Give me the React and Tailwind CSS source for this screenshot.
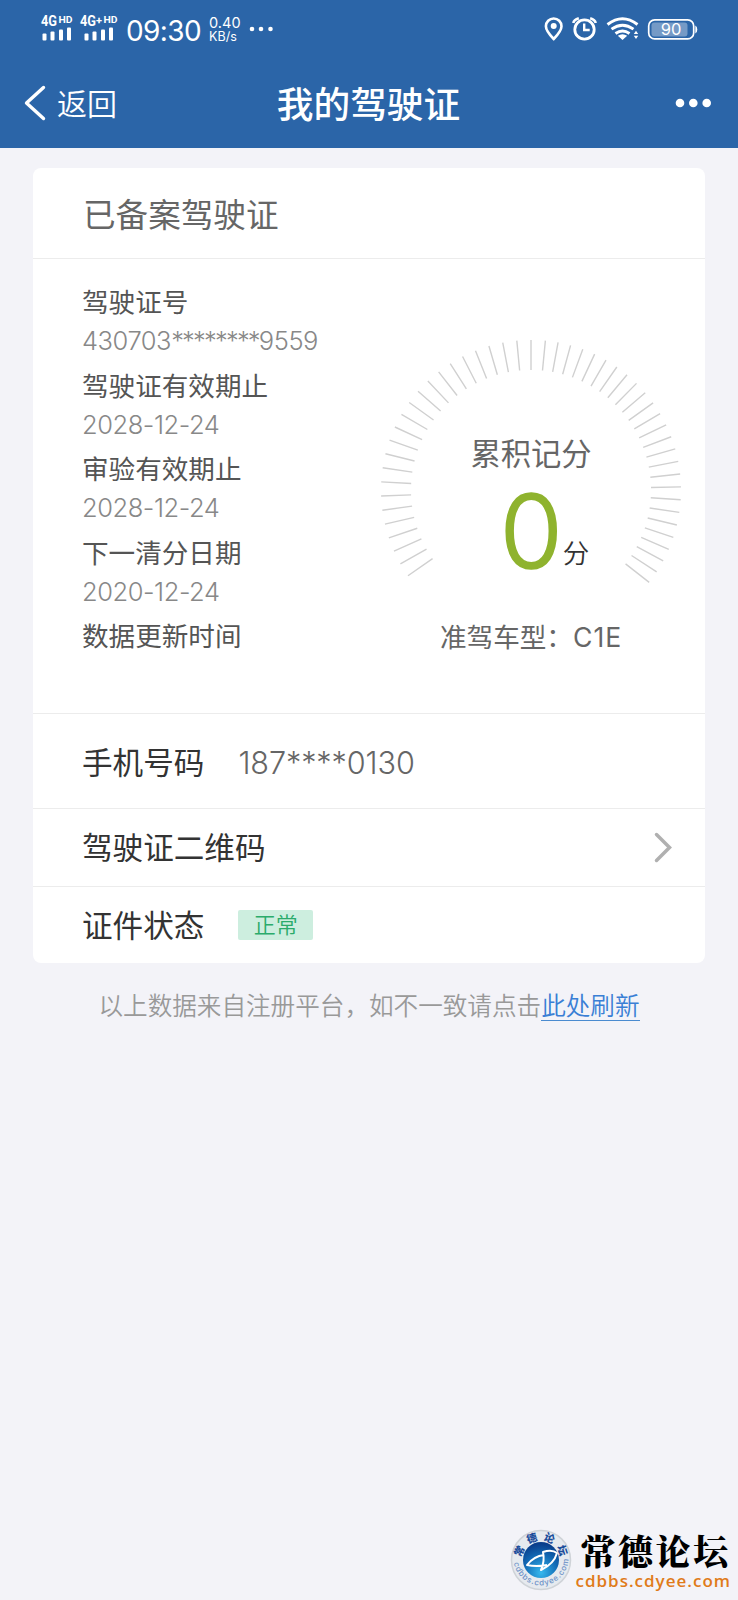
const CJK = "font-['Inter','Noto_Sans_CJK_SC',sans-serif]";

// Score dial, centred on (152, 152)
const OUTER = 150;
const INNER = 120;

function buildTicks() {
  const angles = [0];
  for (let i = 1; i <= 23; i++) angles.push(-5.43 * i);
  for (let i = 1; i <= 26; i++) angles.push(4.9 * i + 0.6);
  return angles.map((deg) => {
    const a = (deg * Math.PI) / 180;
    const x = Math.sin(a);
    const y = -Math.cos(a);
    return `M${(152 + INNER * x).toFixed(2)} ${(152 + INNER * y).toFixed(2)}L${(152 + OUTER * x).toFixed(2)} ${(152 + OUTER * y).toFixed(2)}`;
  }).join('');
}

const TICKS = buildTicks();

const FIELDS = [
  {
    label: '驾驶证号',
    value: <>430703<span className="tracking-[-1.8px]">********</span>9559</>,
  },
  { label: '驾驶证有效期止', value: '2028-12-24' },
  { label: '审验有效期止', value: '2028-12-24' },
  { label: '下一清分日期', value: '2020-12-24' },
  { label: '数据更新时间' },
];

function Signal({ plus }) {
  const w = plus ? 38 : 32;
  const bars = plus ? 4.5 : 1.5;
  return (
    <svg width={w} height="32" viewBox={`0 -4 ${w} 32`} fill="#fff" className="overflow-visible font-['Roboto',sans-serif] font-bold">
      <text x="0" y="11" fontSize="14" textLength="16" lengthAdjust="spacingAndGlyphs">4G</text>
      {plus && <text x="16" y="8.500" fontSize="11">+</text>}
      <text x={plus ? 23.500 : 17.500} y="8" fontSize="9.500" textLength="14" lengthAdjust="spacingAndGlyphs">HD</text>
      <rect x={bars} y="18.500" width="4" height="7" rx="1" />
      <rect x={bars + 8} y="16.500" width="4" height="9" rx="1" />
      <rect x={bars + 16.5} y="14.500" width="4" height="11" rx="1" />
      <rect x={bars + 24.5} y="12.500" width="4" height="13" rx="1" />
    </svg>
  );
}

function StatusBar() {
  return (
    <div className="flex h-[58px] items-center justify-between pl-[41px] pr-[40px] text-white">
      <div className="flex items-center">
        <div className="-mt-[5px] flex gap-[7px]">
          <Signal />
          <Signal plus />
        </div>
        <span className="ml-[8px] mt-[3px] text-[28px] font-normal leading-none tracking-[-0.600px]">09:30</span>
        <div className="ml-[8px] mt-px w-[33px] text-[14.500px] leading-[14px]">
          <div>0.40</div>
          <div className="text-[12.500px]">KB/s</div>
        </div>
        <svg className="ml-[7px]" width="25" height="6" viewBox="0 0 25 6" fill="#fff">
          <circle cx="3" cy="3" r="2.300" />
          <circle cx="12" cy="3" r="2.300" />
          <circle cx="21.500" cy="3" r="2.300" />
        </svg>
      </div>
      <svg width="154" height="26" viewBox="0 0 154 26" fill="none" stroke="#fff" strokeWidth="2.600">
        <path d="M9.700 23Q1.900 15 1.900 10.300a7.800 7.800 0 0 1 15.600 0Q17.500 15 9.700 23Z" />
        <circle cx="9.700" cy="10" r="3" fill="#fff" stroke="none" />
        <circle cx="40.500" cy="13.500" r="9.700" strokeWidth="2.800" />
        <path d="M40.200 7.500v6.500h5.500" strokeWidth="2.400" />
        <path d="M29.300 7q0.700-3.500 5.500-4.800M51.700 7q-0.700-3.500-5.500-4.800" />
        <path d="M63.500 8.500Q78.500-3 93.500 8.500M67.500 13.200q11-8 22 0M71.500 17.500q7-5 14 0" strokeWidth="2.900" />
        <path d="M73.800 19.800q4.700-3 9.400 0L78.500 24Z" fill="#fff" stroke="none" />
        <path d="M89.800 18l2.200-3.300 2.200 3.300zM89.800 19.700l2.200 3.300 2.200-3.300z" fill="#fff" stroke="none" />
        <rect x="104.700" y="3.900" width="45" height="19" rx="6" strokeWidth="1.700" />
        <rect x="107.500" y="6.500" width="36" height="14" rx="3" fill="#fff" fillOpacity="0.350" stroke="none" />
        <path d="M151.300 9.500q2 1 2 4t-2 4z" fill="#fff" stroke="none" />
        <text x="127" y="19" textAnchor="middle" fontSize="16.500" fill="#fff" stroke="none">90</text>
      </svg>
    </div>
  );
}

function NavBar() {
  return (
    <div className="grid h-[90px] grid-cols-[1fr_auto_1fr] items-center pl-[24px] pr-[26px] text-white">
      <div className="flex items-center">
        <svg width="22" height="36" viewBox="0 0 22 36" fill="none" stroke="#fff" strokeWidth="3.400" strokeLinecap="round" strokeLinejoin="round">
          <path d="M19.500 2.500L2.500 18l17 15.500" />
        </svg>
        <span className="ml-[11px] pt-[2px] text-[30px] font-[350] leading-none">返回</span>
      </div>
      <h1 className="pl-px pt-[4px] text-[36.700px] font-medium leading-none">我的驾驶证</h1>
      <svg className="justify-self-end" width="37" height="10" viewBox="0 0 37 10" fill="#fff">
        <circle cx="5" cy="5" r="4.300" />
        <circle cx="18.300" cy="5" r="4.300" />
        <circle cx="31.700" cy="5" r="4.300" />
      </svg>
    </div>
  );
}

function ScoreDial() {
  return (
    <div className="grid h-[304px] w-[304px]">
      <svg className="col-start-1 row-start-1" width="304" height="304" viewBox="0 0 304 304">
        <path d={TICKS} stroke="#d0d0d0" strokeWidth="1.400" />
      </svg>
      <div className="col-start-1 row-start-1 flex flex-col items-center pt-[99px]">
        <div className="text-[30.300px] leading-[34px] text-[#666]">累积记分</div>
        <div className="mt-[9px] flex items-end pl-[27px]">
          <span className="text-[102px] font-[350] leading-[102px] text-[#8fb32e] [-webkit-text-stroke:1.600px_#8fb32e]">0</span>
          <span className="mb-[16px] text-[26.500px] font-[350] leading-none text-[#333]">分</span>
        </div>
      </div>
    </div>
  );
}

function Watermark() {
  return (
    <div className="flex items-center pr-[7px]">
      <svg width="62" height="62" viewBox="0 0 62 62">
        <defs>
          <radialGradient id="ball" cx="0.5" cy="0.85" r="0.8">
            <stop offset="0" stopColor="#37b9ee" />
            <stop offset="0.6" stopColor="#1169b4" />
            <stop offset="1" stopColor="#0a3f8c" />
          </radialGradient>
          <path id="ringTop" d="M11.500 31a19.500 19.500 0 0 1 39 0" />
          <path id="ringBottom" d="M3.500 29a27.500 27.500 0 0 0 55 0" />
        </defs>
        <circle cx="31" cy="31" r="29.500" fill="#e6eaef" stroke="#cfd3d8" strokeWidth="1.500" />
        <circle cx="31" cy="31" r="18" fill="url(#ball)" />
        <path d="M33 23Q42 20 47 24Q44 35 31 41Q35 32 33 23ZM34 26Q24 27 17 36Q26 38 37 36" fill="none" stroke="#fff" strokeWidth="2" strokeLinejoin="round" />
        <text fontSize="10.500" fontWeight="900" fill="#1c4d9b" letterSpacing="4.500"><textPath href="#ringTop" startOffset="2">常德论坛</textPath></text>
        <text fontSize="8" fontWeight="500" fill="#6f93c8" letterSpacing="0.800"><textPath href="#ringBottom" startOffset="5">cdbbs.cdyee.com</textPath></text>
      </svg>
      <div className="ml-[3px] flex flex-col">
        <div className="pl-[5px] font-['Noto_Serif_CJK_SC','Noto_Sans_CJK_SC',serif] text-[35px] font-black leading-[42px] tracking-[2.500px] text-black">常德论坛</div>
        <div className="font-['Open_Sans',sans-serif] text-[17px] font-semibold leading-[20px] tracking-[1px] text-[#e07b1a]">cdbbs.cdyee.com</div>
      </div>
    </div>
  );
}

export default function App() {
  return (
    <div className={`flex h-[1600px] w-[738px] flex-col bg-[#f3f3f8] ${CJK}`}>
      <header className="h-[148px] bg-[#2b65a8]">
        <StatusBar />
        <NavBar />
      </header>

      <main className="mx-[33px] mt-[20px] h-[795px] overflow-hidden rounded-[8px] bg-white">
        <h2 className="flex h-[91px] items-center border-b border-[#ececec] pl-[50px] pt-[4px] text-[32.600px] text-[#666]">已备案驾驶证</h2>

        <section className="flex h-[455px] border-b border-[#ececec] pl-[49px]">
          <dl className="w-[297px] pt-[22px]">
            {FIELDS.map(({ label, value }) => (
              <div key={label} className="h-[83.500px]">
                <dt className="h-[42px] text-[26.600px] leading-[42px] text-[#555]">{label}</dt>
                {value && <dd className="text-[25.500px] font-light leading-[36px] tracking-[-0.450px] text-[#888]">{value}</dd>}
              </div>
            ))}
          </dl>
          <div className="flex flex-col pt-[79px]">
            <ScoreDial />
            <div className="-mt-[22px] pl-[61px] text-[26.600px] leading-[34px] text-[#666]">准驾车型：<span className="tracking-[1px]">C1E</span></div>
          </div>
        </section>

        <div className="flex h-[95px] items-center border-b border-[#ececec] pl-[49px] pt-[3px] text-[30.600px]">
          <span className="text-[#333]">手机号码</span>
          <span className="ml-[34px] font-light tracking-[-0.100px] text-[#666]">187****0130</span>
        </div>

        <div className="flex h-[78px] items-center justify-between border-b border-[#ececec] pl-[49px] pr-[32px] text-[30.600px] text-[#333]">
          <span className="pt-px">驾驶证二维码</span>
          <svg width="20" height="32" viewBox="0 0 20 32" fill="none" stroke="#b0b0b0" strokeWidth="3.500" strokeLinecap="round">
            <path d="M3.500 2.500L16.500 15.500L3.500 28.500" />
          </svg>
        </div>

        <div className="flex h-[76px] items-center pl-[49px] text-[30.600px] text-[#333]">
          <span className="pt-[2px]">证件状态</span>
          <span className="ml-[34px] flex h-[30px] w-[75px] items-center justify-center rounded-[2px] bg-[#cdeedf] pt-px text-[22px] font-[350] text-[#2bab6b]">正常</span>
        </div>
      </main>

      <p className="mt-[25px] flex justify-center text-[24.600px] font-[350] leading-[36px] text-[#999]">
        <span>以上数据来自注册平台，如不一致请点击</span>
        <a href="#refresh" className="h-[33px] border-b-[1.500px] border-[#4a8bd0] text-[#3a7fd5]">此处刷新</a>
      </p>

      <footer className="mt-auto flex justify-end pb-[9px]">
        <Watermark />
      </footer>
    </div>
  );
}
